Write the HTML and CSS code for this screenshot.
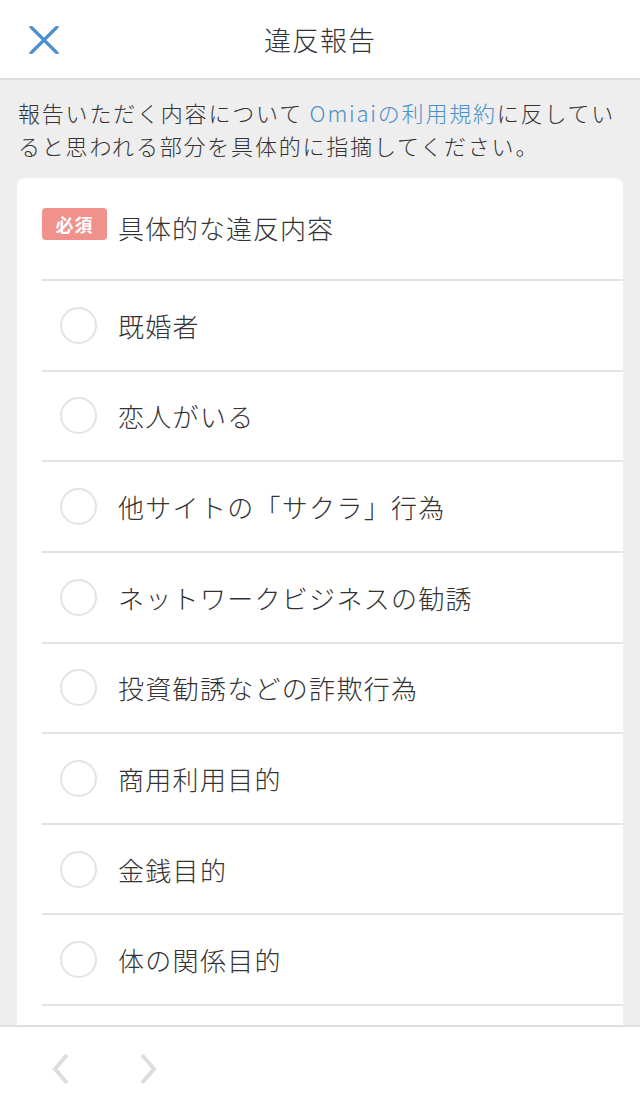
FILE: index.html
```html
<!DOCTYPE html>
<html lang="ja">
<head>
<meta charset="utf-8">
<link rel="stylesheet" href="styles.css">
</head>
<body>
<div class="app">
  <header class="topbar">
    <button class="close" aria-label="閉じる">
      <svg width="30" height="28" viewBox="0 0 30 28"><path d="M2 1 L28 27 M28 1 L2 27" stroke="#4a8fd0" stroke-width="3.2" stroke-linecap="round" fill="none"/></svg>
    </button>
    <h1 class="title">違反報告</h1>
  </header>
  <main class="content">
    <p class="desc">報告いただく内容について <a class="link">Omiaiの利用規約</a>に反していると思われる部分を具体的に指摘してください。</p>
    <section class="card">
      <div class="card-head">
        <span class="badge">必須</span>
        <span class="card-title">具体的な違反内容</span>
      </div>
      <ul class="options">
        <li class="option"><span class="radio"></span><span class="label">既婚者</span></li>
        <li class="option"><span class="radio"></span><span class="label">恋人がいる</span></li>
        <li class="option"><span class="radio"></span><span class="label">他サイトの「サクラ」行為</span></li>
        <li class="option"><span class="radio"></span><span class="label">ネットワークビジネスの勧誘</span></li>
        <li class="option"><span class="radio"></span><span class="label">投資勧誘などの詐欺行為</span></li>
        <li class="option"><span class="radio"></span><span class="label">商用利用目的</span></li>
        <li class="option"><span class="radio"></span><span class="label">金銭目的</span></li>
        <li class="option"><span class="radio"></span><span class="label">体の関係目的</span></li>
        <li class="option"><span class="radio"></span><span class="label">その他</span></li>
      </ul>
    </section>
  </main>
  <footer class="bottombar">
    <svg class="chev" width="24" height="34" viewBox="0 0 24 34"><path d="M18 3 L6 17 L18 31" stroke="#dddddd" stroke-width="4" fill="none"/></svg>
    <svg class="chev" width="24" height="34" viewBox="0 0 24 34"><path d="M6 3 L18 17 L6 31" stroke="#dddddd" stroke-width="4" fill="none"/></svg>
  </footer>
</div>
</body>
</html>
```
FILE: styles.css
```css
* { box-sizing: border-box; }
html, body {
  margin: 0;
  padding: 0;
  height: 100%;
  overflow: hidden;
}
body {
  font-family: "Noto Sans CJK JP", "Noto Sans", sans-serif;
  font-weight: 300;
  color: #333333;
  background: #eeeeee;
}
.app {
  position: relative;
  width: 640px;
  height: 1110px;
  overflow: hidden;
}
.topbar {
  height: 80px;
  background: #ffffff;
  border-bottom: 2px solid #dedede;
  display: flex;
  align-items: center;
  justify-content: center;
  position: relative;
}
.close {
  position: absolute;
  left: 29px;
  top: 26px;
  background: none;
  border: 0;
  padding: 0;
  line-height: 0;
}
.title {
  margin: 0;
  font-size: 27px;
  font-weight: 300;
  letter-spacing: 1px;
  color: #333333;
}
.content {
  padding: 16px 17px 0 17px;
}
.desc {
  margin: 0 0 16px 1px;
  font-size: 22px;
  line-height: 33px;
  letter-spacing: 1.8px;
  color: #333333;
}
.link {
  color: #4a90cc;
}
.card {
  background: #ffffff;
  border-radius: 8px;
}
.card-head {
  height: 103px;
  display: flex;
  align-items: flex-start;
  padding-top: 30px;
  border-bottom: 2px solid #e3e3e3;
  margin-left: 25px;
}
.badge {
  width: 65px;
  height: 32px;
  background: #f0918b;
  color: #ffffff;
  border-radius: 4px;
  font-size: 18px;
  font-weight: 700;
  display: flex;
  align-items: center;
  justify-content: center;
  letter-spacing: 1px;
}
.card-title {
  margin-left: 11px;
  font-size: 26px;
  line-height: 40px;
  letter-spacing: 1px;
}
.options {
  list-style: none;
  margin: 0 0 0 25px;
  padding: 0;
}
.option {
  height: 90.625px;
  display: flex;
  align-items: center;
  border-bottom: 2px solid #e3e3e3;
}
.radio {
  width: 37px;
  height: 37px;
  border: 2px solid #e3e3e3;
  border-radius: 50%;
  margin-left: 18px;
  flex: none;
}
.label {
  margin-left: 21px;
  font-size: 26px;
  letter-spacing: 1.3px;
  color: #333333;
}
.bottombar {
  position: absolute;
  left: 0;
  right: 0;
  bottom: 0;
  height: 85px;
  background: #ffffff;
  border-top: 2px solid #e0e0e0;
  display: flex;
  align-items: center;
  padding-left: 49px;
  gap: 63px;
}
```
